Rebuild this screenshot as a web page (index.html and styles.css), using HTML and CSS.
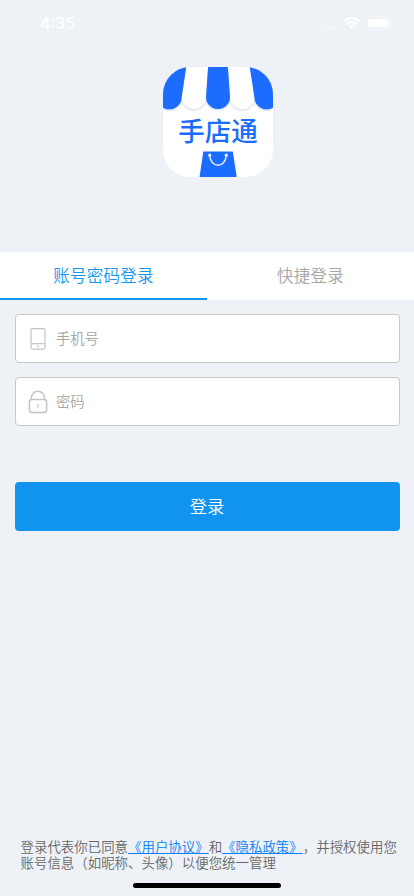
FILE: index.html
```html
<!DOCTYPE html>
<html lang="zh-CN">
<head>
<meta charset="utf-8">
<meta name="viewport" content="width=device-width, initial-scale=1">
<title>手店通</title>
<link rel="stylesheet" href="styles.css">
</head>
<body>
<div class="screen">
  <header class="status">
    <span class="time">4:35</span>
    <svg class="status-icons" width="76" height="16" viewBox="0 0 76 16">
      <g fill="#fff" opacity=".4"><circle cx="2.500" cy="12" r="1.500"/><circle cx="7.300" cy="12" r="1.500"/><circle cx="12.100" cy="12" r="1.500"/><circle cx="16.900" cy="12" r="1.500"/></g>
      <g fill="none" stroke="#fff" stroke-width="2.300"><path d="M26.200 6.100a10.500 10.500 0 0 1 14.800 0M28.900 9a6.600 6.600 0 0 1 9.400 0"/></g>
      <path d="M30.900 11.300a3.800 3.800 0 0 1 5.400 0L33.600 14z" fill="#fff"/>
      <rect x="48.300" y="2" width="24.500" height="12" rx="3.500" fill="none" stroke="#fff" opacity=".4"/>
      <rect x="50" y="4" width="20.500" height="8" rx="2" fill="#fff"/>
      <path d="M74 6v4q1.500-.7 1.500-2T74 6z" fill="#fff" opacity=".5"/>
    </svg>
  </header>

  <div class="brand">
    <svg class="logo" width="110" height="110" viewBox="0 0 110 110">
      <defs>
        <clipPath id="tile"><rect width="110" height="110" rx="27"/></clipPath>
        <filter id="soft" x="-10%" y="-10%" width="120%" height="130%"><feDropShadow dx="0" dy="1" stdDeviation="1.200" flood-color="#5a78b0" flood-opacity=".35"/></filter>
      </defs>
      <g clip-path="url(#tile)">
        <rect width="110" height="110" fill="#fff"/>
        <g filter="url(#soft)">
          <path d="M23.700-3 18.700 30a12.100 12.100 0 0 0 24.300 0L45.300-3zM64.700-3 67 30a12.200 12.200 0 0 0 24.400 0L86.300-3z" fill="#fff"/>
          <path d="M-6-3V30a12.300 12.300 0 0 0 24.700 0L23.700-3zM45.300-3 43 30a12 12 0 0 0 24 0L64.700-3zM86.300-3 91.400 30a12.300 12.300 0 0 0 24.700 0V-3z" fill="#1a6dff"/>
        </g>
        <text class="logo-text" x="55" y="73.700">手店通</text>
        <path d="M40.300 84.500h29.500l4 26H36.500z" fill="#1a6dff"/>
        <path d="M46.700 88.500c1 13 15.600 13 16.600 0" fill="none" stroke="#e4eeff" stroke-width="1.500"/>
        <circle cx="46.700" cy="88.200" r="1.600" fill="#e4eeff"/><circle cx="63.300" cy="88.200" r="1.600" fill="#e4eeff"/>
      </g>
    </svg>
  </div>

  <nav class="tabs">
    <a class="tab active">账号密码登录</a>
    <a class="tab">快捷登录</a>
  </nav>

  <main class="form">
    <label class="field">
      <svg class="field-icon" width="20" height="24" viewBox="0 0 20 24" fill="none" stroke="#c4c4c4" stroke-width="1.200">
        <rect x="3" y="1.600" width="14" height="20.600" rx="1.500"/><path d="M3 16.700h14"/><circle cx="10" cy="19.500" r=".3"/>
      </svg>
      <span class="placeholder">手机号</span>
    </label>
    <label class="field">
      <svg class="field-icon" width="20" height="24" viewBox="0 0 20 24" fill="none" stroke="#c4c4c4" stroke-width="1.500">
        <rect x="1.400" y="9.400" width="17.200" height="13" rx="2.500"/><path d="M3.400 9.400V7.900a6.600 6.600 0 0 1 13.200 0v1.500"/><path d="M10 14.200v3.600" stroke-width="1.200"/>
      </svg>
      <span class="placeholder">密码</span>
    </label>
    <button class="submit" type="button">登录</button>
  </main>

  <footer class="legal">
    <p>登录代表你已同意<a>《用户协议》</a>和<a>《隐私政策》</a>，并授权使用您<br>账号信息（如昵称、头像）以便您统一管理</p>
    <div class="home-bar"></div>
  </footer>
</div>
</body>
</html>
```
FILE: styles.css
```css
* { box-sizing: border-box; }
body {
  margin: 0;
  background: #eef2f7;
  font-family: "Noto Sans CJK SC", sans-serif;
  font-weight: 350;
  text-spacing-trim: space-all;
}
.screen {
  height: 896px;
  display: flex;
  flex-direction: column;
}
.status {
  height: 44px;
  padding: 2px 20px 0 40px;
  display: flex;
  align-items: center;
  justify-content: space-between;
  color: #fff;
}
.time {
  font: 500 16px Inter, sans-serif;
}
.brand {
  height: 208px;
  padding: 23px 0 0 163px;
}
.logo { display: block; }
.logo-text {
  font-size: 26.5px;
  font-weight: 500;
  text-anchor: middle;
  fill: #1a6dff;
}
.tabs {
  height: 48px;
  display: flex;
  background: #fff;
}
.tab {
  flex: 1;
  height: 48px;
  border-bottom: 2px solid transparent;
  text-align: center;
  line-height: 47px;
  font-size: 16.5px;
  letter-spacing: .25px;
  color: #a5a5a5;
}
.tab.active {
  color: #1296f0;
  border-color: #1296f0;
}
.form {
  padding: 14px 14.5px 0;
  display: flex;
  flex-direction: column;
  gap: 14px;
}
.field {
  height: 49px;
  padding-left: 12.5px;
  display: flex;
  align-items: center;
  gap: 8px;
  border: 1px solid #c8c8c8;
  border-radius: 4px;
  background: #fff;
}
.placeholder {
  padding-bottom: 2px;
  font-size: 14.3px;
  color: #a5a5a5;
}
.submit {
  height: 49px;
  margin-top: 42px;
  padding: 0 0 2px;
  border: 0;
  border-radius: 4px;
  background: #1194f0;
  color: #fff;
  font: inherit;
  font-size: 17.3px;
}
.legal {
  margin-top: auto;
  padding: 0 0 8.5px 20.5px;
  color: #666;
  font-size: 13.45px;
  line-height: 16px;
  white-space: nowrap;
}
.legal p { margin: 0 0 13px; }
.legal a {
  color: #0b80f5;
  text-decoration: underline;
}
.home-bar {
  width: 148px;
  height: 5px;
  margin-left: 112.5px;
  border-radius: 3px;
  background: #000;
}
```
